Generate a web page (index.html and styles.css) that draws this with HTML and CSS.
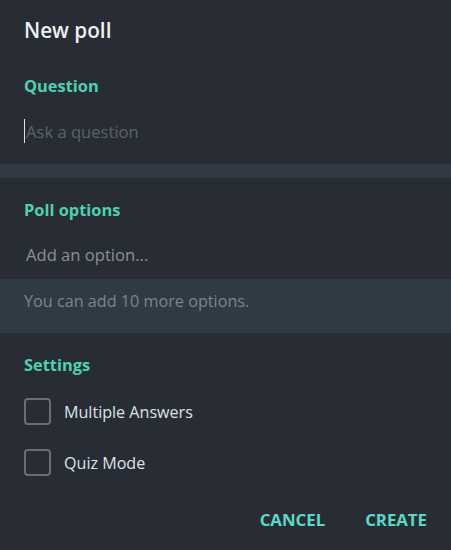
FILE: index.html
```html
<!DOCTYPE html>
<html>
<head>
<meta charset="utf-8">
<link rel="stylesheet" href="styles.css">
</head>
<body>
<div class="dialog">
  <div class="title">New poll</div>
  <div class="section">
    <div class="label">Question</div>
    <div class="input"><span class="cursor"></span><span class="ph dim">Ask a question</span></div>
  </div>
  <div class="divider"></div>
  <div class="section">
    <div class="label">Poll options</div>
    <div class="input option"><span class="ph">Add an option...</span></div>
  </div>
  <div class="info">You can add 10 more options.</div>
  <div class="section settings">
    <div class="label">Settings</div>
    <div class="check"><span class="box"></span><span>Multiple Answers</span></div>
    <div class="check"><span class="box"></span><span>Quiz Mode</span></div>
  </div>
  <div class="buttons">
    <span class="btn">CANCEL</span>
    <span class="btn">CREATE</span>
  </div>
</div>
</body>
</html>
```
FILE: styles.css
```css
html, body {
  margin: 0;
  padding: 0;
  background: #282d35;
}
body {
  font-family: "Open Sans", "Noto Sans", sans-serif;
  width: 451px;
  height: 550px;
  overflow: hidden;
}
.dialog {
  display: flex;
  flex-direction: column;
}
.title {
  color: #eef0f2;
  font-size: 20.7px;
  font-weight: 600;
  padding: 16px 24px 0;
  line-height: 28px;
}
.section {
  padding: 0 24px;
}
.label {
  color: #4fd0b0;
  font-size: 16.4px;
  font-weight: 700;
  line-height: 24px;
}
.title + .section .label {
  margin-top: 30px;
}
.input {
  display: flex;
  align-items: center;
  height: 24px;
  margin-top: 21px;
  margin-bottom: 21px;
  font-size: 16.6px;
}
.cursor {
  width: 1px;
  height: 24px;
  background: #dfe3e6;
}
.ph {
  color: #8a9098;
  padding-left: 2px;
}
.ph.dim {
  color: #5b636c;
  padding-left: 1px;
}
.divider {
  height: 14px;
  background: #313a42;
}
.divider + .section .label {
  margin-top: 20px;
}
.option {
  margin-top: 20px;
  margin-bottom: 13px;
}
.info {
  background: #2f3a42;
  color: #7d858d;
  font-size: 16.2px;
  height: 54px;
  line-height: 44px;
  padding: 0 24px;
}
.settings .label {
  margin-top: 20px;
}
.check {
  display: flex;
  align-items: center;
  gap: 13px;
  color: #dfe2e5;
  font-size: 16.1px;
  height: 27px;
  margin-top: 21px;
}
.check + .check {
  margin-top: 24px;
}
.box {
  box-sizing: border-box;
  width: 27px;
  height: 27px;
  border: 2px solid #696e75;
  border-radius: 4px;
}
.buttons {
  display: flex;
  justify-content: flex-end;
  gap: 40px;
  padding: 33px 24px 0;
}
.btn {
  color: #5ed8c6;
  font-size: 16.8px;
  font-weight: 700;
  line-height: 22px;
}
```
